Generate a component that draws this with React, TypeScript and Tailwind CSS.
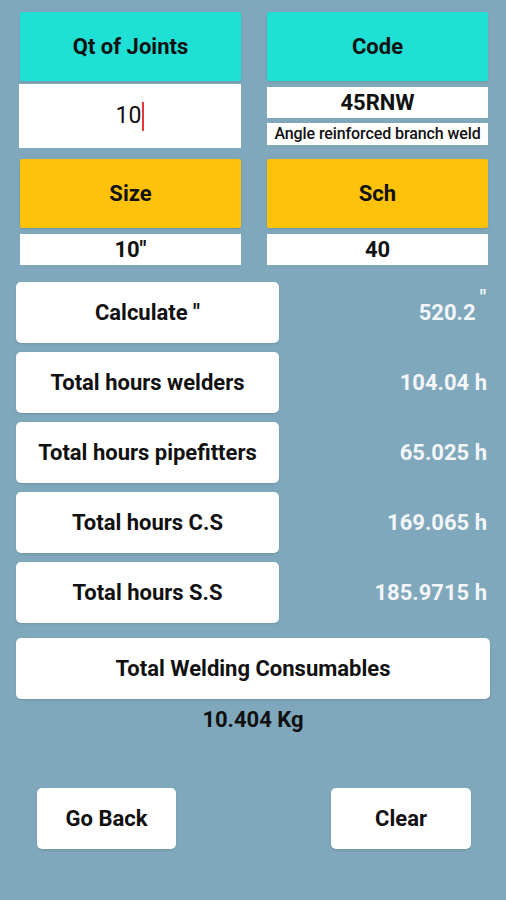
import React from 'react';

const rows = [
  { label: 'Calculate "', value: '520.2', sup: true },
  { label: 'Total hours welders', value: '104.04 h' },
  { label: 'Total hours pipefitters', value: '65.025 h' },
  { label: 'Total hours C.S', value: '169.065 h' },
  { label: 'Total hours S.S', value: '185.9715 h' },
];

export default function App() {
  return (
    <main
      className="w-[506px] h-[900px] bg-[#80a8bc] text-[#111] overflow-hidden"
      style={{ fontFamily: 'Roboto, "Noto Sans", sans-serif' }}
    >
      {/* Inputs */}
      <div className="flex justify-between pl-[20px] pr-[18px] pt-[12px]">
        <div className="flex flex-col w-[221px]">
          <div className="h-[69px] bg-[#1ee0d5] rounded-[2px] shadow-sm flex items-center justify-center text-[22px] font-bold">
            Qt of Joints
          </div>
          <div className="mt-[3px] -ml-px h-[64px] bg-white flex items-center justify-center text-[23px]">
            <span>10</span>
            <span className="w-[2px] h-[29px] bg-[#e53935] ml-px" />
          </div>
          <div className="mt-[11px] h-[69px] bg-[#ffc20a] rounded-[2px] shadow-sm flex items-center justify-center text-[22px] font-bold">
            Size
          </div>
          <div className="mt-[6px] h-[31px] bg-white flex items-center justify-center text-[22px] font-bold">
            10"
          </div>
        </div>
        <div className="flex flex-col w-[221px]">
          <div className="h-[69px] bg-[#1ee0d5] rounded-[2px] shadow-sm flex items-center justify-center text-[22px] font-bold">
            Code
          </div>
          <div className="mt-[6px] h-[31px] bg-white flex items-center justify-center text-[22px] font-bold">
            45RNW
          </div>
          <div className="mt-[5px] h-[22px] bg-white flex items-center justify-center text-[16px] font-medium tracking-[-0.1px]">
            Angle reinforced branch weld
          </div>
          <div className="mt-[14px] h-[69px] bg-[#ffc20a] rounded-[2px] shadow-sm flex items-center justify-center text-[22px] font-bold">
            Sch
          </div>
          <div className="mt-[6px] h-[31px] bg-white flex items-center justify-center text-[22px] font-bold">
            40
          </div>
        </div>
      </div>

      {/* Results */}
      <div className="flex flex-col gap-[9px] pl-[16px] pr-[19px] mt-[17px]">
        {rows.map((r) => (
          <div key={r.label} className="flex items-center justify-between">
            <button className="w-[263px] h-[61px] bg-white rounded-[5px] shadow-sm text-[22px] font-bold">
              {r.label}
            </button>
            <span className="flex text-[22px] font-bold text-[#f2f6f8]">
              {r.value}
              {r.sup && (
                <span className="text-[20px] leading-none -mt-[9px] ml-[4px] mr-[1px]">"</span>
              )}
            </span>
          </div>
        ))}
      </div>

      <div className="px-[16px] mt-[15px]">
        <div className="h-[61px] bg-white rounded-[5px] shadow-sm flex items-center justify-center text-[22px] font-bold">
          Total Welding Consumables
        </div>
        <div className="text-center text-[22px] font-bold mt-[4px]">10.404 Kg</div>
      </div>

      <div className="flex justify-between pl-[37px] pr-[35px] mt-[52px]">
        <button className="w-[139px] h-[61px] bg-white rounded-[5px] shadow-sm text-[22px] font-bold">
          Go Back
        </button>
        <button className="w-[140px] h-[61px] bg-white rounded-[5px] shadow-sm text-[22px] font-bold">
          Clear
        </button>
      </div>
    </main>
  );
}
